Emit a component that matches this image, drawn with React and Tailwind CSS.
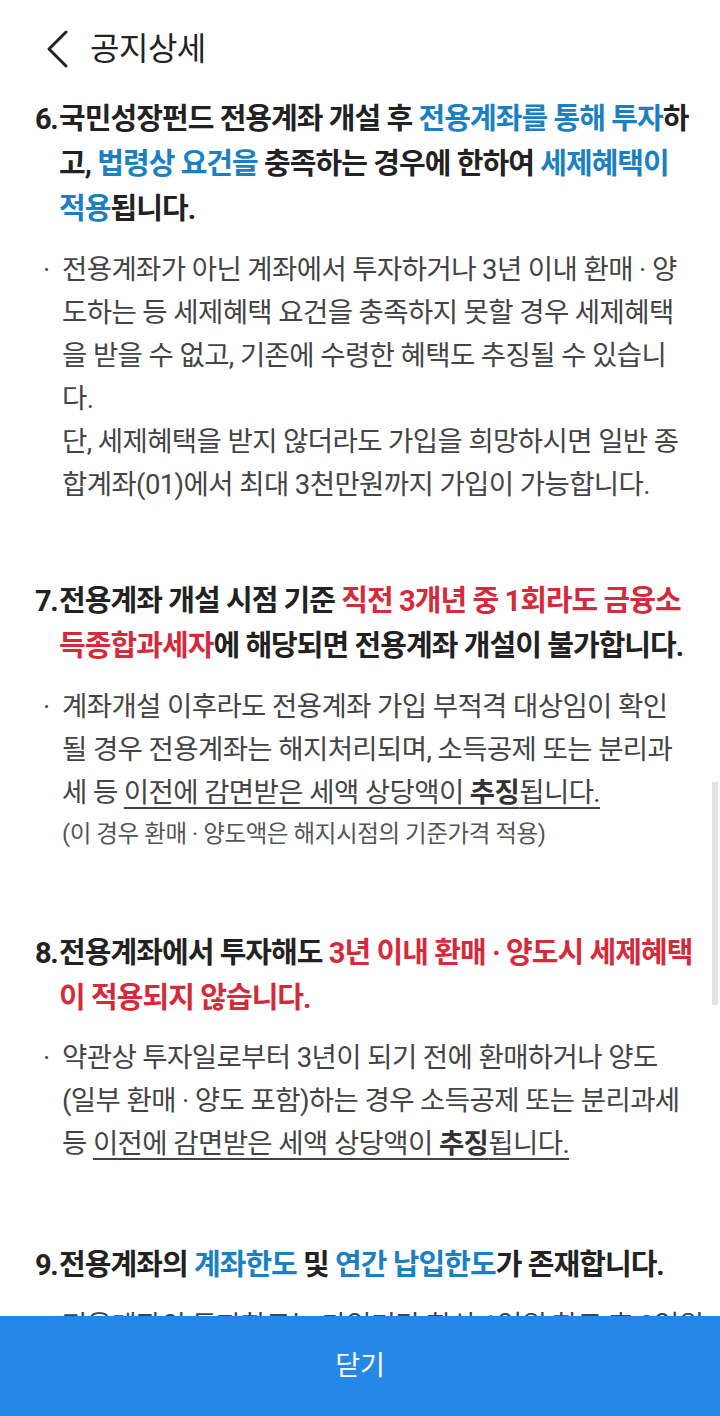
const KR = { fontFamily: 'Roboto, "Noto Sans CJK KR", "Noto Sans", sans-serif' };

function Title({ no, children }) {
  return (
    <div className="flex text-[29px] leading-[45px] font-bold tracking-[-0.95px] text-[#222]">
      <span className="w-[24px] shrink-0 tracking-[-1.5px]">{no}</span>
      <div className="flex-1">{children}</div>
    </div>
  );
}

function Bullet({ children }) {
  return (
    <div className="flex pl-[8px] text-[27.5px] leading-[43px] tracking-[-0.6px] text-[#444]">
      <span className="w-[19px] shrink-0">·</span>
      <div className="flex-1">{children}</div>
    </div>
  );
}

const L = ({ children, className = "" }) => <span className={"block whitespace-nowrap " + className}>{children}</span>;
const B = ({ children }) => <span className="text-[#1b7fc4]">{children}</span>;
const R = ({ children }) => <span className="text-[#d42b3c]">{children}</span>;
const U = ({ children }) => <span className="underline underline-offset-[5px] decoration-[1.5px]">{children}</span>;

export default function App() {
  return (
    <div style={KR} className="relative h-[1416px] overflow-hidden bg-white">
      <header className="flex h-[97px] items-center pl-[44px]">
        <svg width="26" height="38" viewBox="0 0 26 38" fill="none">
          <path d="M22 2 L5 19 L22 36" stroke="#222" strokeWidth="3" strokeLinecap="round" strokeLinejoin="round" />
        </svg>
        <h1 className="ml-[20px] text-[32px] tracking-[-0.5px] text-[#222]">공지상세</h1>
      </header>

      <main className="pl-[35px] pr-[28px]">
        <section>
          <Title no="6.">
            <L>국민성장펀드 전용계좌 개설 후 <B>전용계좌를 통해 투자</B>하</L>
            <L>고, <B>법령상 요건을</B> 충족하는 경우에 한하여 <B>세제혜택이</B></L>
            <L><B>적용</B>됩니다.</L>
          </Title>
          <div className="mt-[16px]">
            <Bullet>
              <L>전용계좌가 아닌 계좌에서 투자하거나 3년 이내 환매 · 양</L>
              <L>도하는 등 세제혜택 요건을 충족하지 못할 경우 세제혜택</L>
              <L>을 받을 수 없고, 기존에 수령한 혜택도 추징될 수 있습니</L>
              <L>다.</L>
              <L>단, 세제혜택을 받지 않더라도 가입을 희망하시면 일반 종</L>
              <L>합계좌(01)에서 최대 3천만원까지 가입이 가능합니다.</L>
            </Bullet>
          </div>
        </section>

        <section className="mt-[73px]">
          <Title no="7.">
            <L>전용계좌 개설 시점 기준 <R>직전 3개년 중 1회라도 금융소</R></L>
            <L><R>득종합과세자</R>에 해당되면 전용계좌 개설이 불가합니다.</L>
          </Title>
          <div className="mt-[16px]">
            <Bullet>
              <L>계좌개설 이후라도 전용계좌 가입 부적격 대상임이 확인</L>
              <L>될 경우 전용계좌는 해지처리되며, 소득공제 또는 분리과</L>
              <L>세 등 <U>이전에 감면받은 세액 상당액이 <b className="font-bold text-[#333]">추징</b>됩니다.</U></L>
              <L className="text-[23.5px] leading-[40px] tracking-[-0.4px] text-[#555]">(이 경우 환매 · 양도액은 해지시점의 기준가격 적용)</L>
            </Bullet>
          </div>
        </section>

        <section className="mt-[77px]">
          <Title no="8.">
            <L>전용계좌에서 투자해도 <R>3년 이내 환매 · 양도시 세제혜택</R></L>
            <L><R>이 적용되지 않습니다.</R></L>
          </Title>
          <div className="mt-[15px]">
            <Bullet>
              <L>약관상 투자일로부터 3년이 되기 전에 환매하거나 양도</L>
              <L>(일부 환매 · 양도 포함)하는 경우 소득공제 또는 분리과세</L>
              <L>등 <U>이전에 감면받은 세액 상당액이 <b className="font-bold text-[#333]">추징</b>됩니다.</U></L>
            </Bullet>
          </div>
        </section>

        <section className="mt-[78px]">
          <Title no="9.">
            <L>전용계좌의 <B>계좌한도</B> 및 <B>연간 납입한도</B>가 존재합니다.</L>
          </Title>
          <div className="mt-[16px]">
            <Bullet>
              <L>전용계좌의 투자한도는 가입기간 합산 1억원 한도 후 3억원</L>
            </Bullet>
          </div>
        </section>
      </main>

      <div className="absolute right-[2px] top-[782px] h-[223px] w-[6px] bg-[#e3e3e3]" />

      <button className="absolute bottom-0 left-0 flex h-[100px] w-full items-center justify-center bg-[#2588e8] text-[27px] text-white">
        닫기
      </button>
    </div>
  );
}
